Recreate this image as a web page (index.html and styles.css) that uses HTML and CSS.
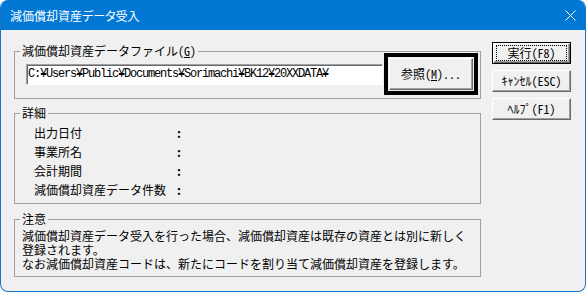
FILE: index.html
```html
<!DOCTYPE html>
<html>
<head>
  <title>減価償却資産データ受入</title>
  <link rel="stylesheet" href="styles.css">
</head>
<body>
  <div class="window">
    <div class="titlebar">
      <span class="title">減価償却資産データ受入</span>
      <svg class="close" width="11" height="11" viewBox="0 0 11 11">
        <path d="M0.5 0.5L10.5 10.5M10.5 0.5L0.5 10.5" stroke="#fff" stroke-width="1" fill="none"/>
      </svg>
    </div>

    <div class="content">
      <div class="main">
        <fieldset class="group group-file">
          <legend>減価償却資産データファイル(<u>G</u>)</legend>
          <div class="file-row">
            <input class="path" type="text" value="C:¥Users¥Public¥Documents¥Sorimachi¥BK12¥20XXDATA¥">
            <div class="focus-box">
              <button class="btn browse">参照(<u>M</u>)...</button>
            </div>
          </div>
        </fieldset>

        <fieldset class="group group-detail">
          <legend>詳細</legend>
          <div class="detail-list">
            <span>出力日付</span><span class="colon">:</span>
            <span>事業所名</span><span class="colon">:</span>
            <span>会計期間</span><span class="colon">:</span>
            <span>減価償却資産データ件数</span><span class="colon">:</span>
          </div>
        </fieldset>

        <fieldset class="group group-note">
          <legend>注意</legend>
          <p class="note">減価償却資産データ受入を行った場合、減価償却資産は既存の資産とは別に新しく<br>登録されます。<br>なお減価償却資産コードは、新たにコードを割り当て減価償却資産を登録します。</p>
        </fieldset>
      </div>

      <div class="actions">
        <button class="btn default"><span class="focus">実行(F8)</span></button>
        <button class="btn">ｷｬﾝｾﾙ(ESC)</button>
        <button class="btn">ﾍﾙﾌﾟ(F1)</button>
      </div>
    </div>
  </div>
</body>
</html>
```

FILE: styles.css
```css
body {
  margin: 0;
  background-color: #fff;
  color: #000;
  font-family: "Noto Sans CJK JP", sans-serif;
  font-size: 12px;
  font-feature-settings: "hwid";
}

.window {
  width: 586px;
  height: 292px;
  box-sizing: border-box;
  border: 1px solid #1a73c9;
  border-top: none;
  border-radius: 8px;
  overflow: hidden;
  background-color: #f0f0f0;
}

.titlebar {
  height: 30px;
  background-color: #0078d4;
  color: #fff;
  display: flex;
  align-items: center;
  justify-content: space-between;
  padding: 0 9px 0 9px;
}

.title {
  font-size: 12px;
  font-feature-settings: "palt";
}

.close {
  display: block;
}

.content {
  display: flex;
  align-items: flex-start;
  gap: 11px;
  padding: 12px 0 0 13px;
}

.main {
  width: 467px;
  margin-top: 3px;
  display: flex;
  flex-direction: column;
}

/* group frames */
.group {
  margin: 0;
  min-width: 0;
  padding: 0 0 0 5px;
  border: 1px solid #a0a0a0;
}

.group legend {
  padding: 0 2px;
  line-height: 12px;
}

.group-file {
  padding-bottom: 3px;
}

.group-detail {
  margin-top: 8px;
  padding-top: 4px;
  padding-bottom: 4px;
}

.group-note {
  margin-top: 9px;
  padding-top: 4px;
  padding-bottom: 5px;
}

.file-row {
  display: flex;
  align-items: center;
  margin: -4px 0 0 6px;
}

.path {
  width: 357px;
  height: 21px;
  box-sizing: border-box;
  margin: 0;
  padding: 0 1px;
  border: 1px solid;
  border-color: #a0a0a0 #fff #fff #a0a0a0;
  box-shadow: inset 1px 1px #696969;
  background-color: #fff;
  font-family: "Liberation Mono", monospace;
  font-size: 12px;
  letter-spacing: -1.2px;
  color: #000;
}

.focus-box {
  margin-left: 1px;
  border: 4px solid #000;
  padding: 1px;
}

.detail-list {
  display: grid;
  grid-template-columns: 142px auto;
  line-height: 19px;
  margin-left: 14px;
}

.colon {
  font-weight: bold;
}

.note {
  margin: 0 0 0 2px;
  line-height: 14px;
  white-space: nowrap;
}

/* buttons */
.btn {
  display: block;
  box-sizing: border-box;
  margin: 0;
  padding: 0;
  width: 79px;
  height: 22px;
  background-color: #f0f0f0;
  border: 1px solid;
  border-color: #fff #696969 #696969 #fff;
  box-shadow: inset -1px -1px #a0a0a0;
  font-family: "Noto Sans CJK JP", sans-serif;
  font-size: 12px;
  font-feature-settings: "hwid";
  color: #000;
  line-height: 18px;
}

.browse {
  width: 84px;
  height: 32px;
}

.actions {
  display: flex;
  flex-direction: column;
  gap: 6px;
}

.default {
  border: 1px solid #000;
  box-shadow: inset 1px 1px #fff, inset -1px -1px #696969, inset -2px -2px #a0a0a0;
}

.default .focus {
  display: block;
  margin: 2px 3px;
  height: 16px;
  box-sizing: border-box;
  border: 1px dotted #000;
  line-height: 14px;
}
```
